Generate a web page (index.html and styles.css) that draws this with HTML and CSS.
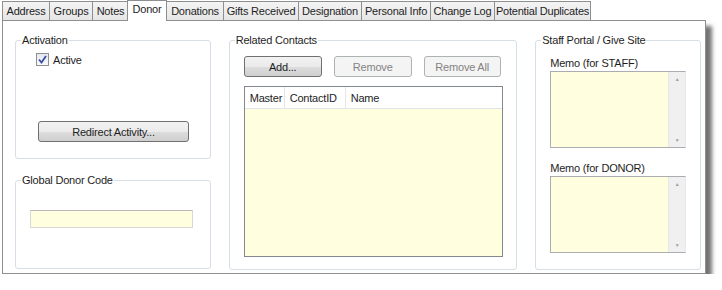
FILE: index.html
```html
<!DOCTYPE html>
<html lang="en">
<head>
    <meta charset="UTF-8">
    <title>Donor</title>
    <link rel="stylesheet" href="styles.css">
</head>
<body>

<div class="window">
    <div class="tabs">
        <div class="tab w47">Address</div>
        <div class="tab w43">Groups</div>
        <div class="tab w36">Notes</div>
        <div class="tab active">Donor</div>
        <div class="tab w57">Donations</div>
        <div class="tab w75">Gifts Received</div>
        <div class="tab w63">Designation</div>
        <div class="tab w69">Personal Info</div>
        <div class="tab w64">Change Log</div>
        <div class="tab w96">Potential Duplicates</div>
    </div>

    <div class="panel">
        <div class="col-left">
            <fieldset class="group activation">
                <legend>Activation</legend>
                <label class="check">
                    <span class="box">
                        <svg width="9" height="9" viewBox="0 0 9 9"><path d="M1 4.5 L3.5 7.5 L8 1" fill="none" stroke="#3b4fa0" stroke-width="1.8"/></svg>
                    </span>
                    Active
                </label>
                <button class="btn redirect">Redirect Activity...</button>
            </fieldset>

            <fieldset class="group global-code">
                <legend>Global Donor Code</legend>
                <div class="textbox"></div>
            </fieldset>
        </div>

        <fieldset class="group related">
            <legend>Related Contacts</legend>
            <div class="btn-row">
                <button class="btn">Add...</button>
                <button class="btn disabled">Remove</button>
                <button class="btn disabled">Remove All</button>
            </div>
            <div class="list">
                <div class="list-head">
                    <span class="col-master">Master</span>
                    <span class="col-id">ContactID</span>
                    <span class="col-name">Name</span>
                </div>
            </div>
        </fieldset>

        <fieldset class="group portal">
            <legend>Staff Portal / Give Site</legend>
            <div class="memo-label">Memo (for STAFF)</div>
            <div class="memo">
                <div class="memo-scroll"><span class="arrow">&#9650;</span><span class="arrow">&#9660;</span></div>
            </div>
            <div class="memo-label">Memo (for DONOR)</div>
            <div class="memo">
                <div class="memo-scroll"><span class="arrow">&#9650;</span><span class="arrow">&#9660;</span></div>
            </div>
        </fieldset>
    </div>
</div>

</body>
</html>
```

FILE: styles.css
```css
body {
    margin: 0;
    background: #ffffff;
    font-family: "Liberation Sans", Arial, sans-serif;
    font-size: 11px;
    letter-spacing: -0.2px;
    color: #1e1e1e;
}
.window {
    margin-left: 2px;
    width: 704px;
}
.tabs {
    display: flex;
    height: 20px;
    align-items: flex-end;
}
.tab {
    height: 19px;
    line-height: 18px;
    box-sizing: border-box;
    background: linear-gradient(#f4f4f4, #e6e6e6);
    border: 1px solid #8e8f8f;
    border-bottom: none;
    margin-right: -1px;
    white-space: nowrap;
    text-align: center;
    overflow: hidden;
}
.w36 { width: 37px; }
.w43 { width: 44px; }
.w47 { width: 48px; }
.w57 { width: 58px; }
.w63 { width: 64px; }
.w64 { width: 65px; }
.w69 { width: 70px; }
.w75 { width: 76px; }
.w96 { width: 97px; }
.tab.active {
    width: 40px;
    height: 21px;
    margin: 0 0 -1px -1px;
    background: #ffffff;
    position: relative;
    z-index: 1;
    line-height: 17px;
}
.tab.active + .tab {
    margin-left: -1px;
}
.panel {
    height: 254px;
    box-sizing: border-box;
    border: 1px solid #8e8f8f;
    background: #ffffff;
    box-shadow: 6px 6px 4px rgba(0, 0, 0, 0.55);
    padding: 13px 4px 0 12px;
    display: flex;
    gap: 18px;
}
.group {
    margin: 0;
    border: 1px solid #d5dfe5;
    border-radius: 3px;
    padding: 0;
    box-sizing: border-box;
}
.group legend {
    margin-left: 5px;
    padding: 0 1px;
}
.col-left {
    width: 196px;
    display: flex;
    flex-direction: column;
    gap: 15px;
}
.activation {
    height: 125px;
    padding-top: 7px;
}
.check {
    display: flex;
    align-items: center;
    gap: 4px;
    margin-left: 20px;
}
.box {
    width: 11px;
    height: 11px;
    border: 1px solid #8f8f8f;
    background: linear-gradient(#e4e8f2, #f8f9fb);
    display: flex;
    align-items: center;
    justify-content: center;
}
.btn {
    font-family: inherit;
    font-size: 11px;
    letter-spacing: -0.2px;
    height: 21px;
    border: 1px solid #707070;
    border-radius: 3px;
    background: linear-gradient(#f2f2f2 0%, #ebebeb 50%, #dddddd 51%, #cfcfcf 100%);
    color: #1e1e1e;
    padding: 0;
}
.btn.disabled {
    border-color: #adb2b5;
    background: #f4f4f4;
    color: #838383;
}
.redirect {
    width: 151px;
    margin: 55px 0 0 22px;
}
.global-code {
    height: 95px;
    padding-top: 24px;
}
.textbox {
    width: 163px;
    height: 18px;
    margin-left: 14px;
    box-sizing: border-box;
    border: 1px solid #d8d8d8;
    border-top-color: #b8b8b8;
    background: #ffffe0;
}
.related {
    width: 289px;
    height: 236px;
    padding-top: 10px;
}
.btn-row {
    display: flex;
    gap: 12px;
    margin-left: 14px;
}
.btn-row .btn {
    width: 78px;
}
.btn-row .btn:nth-child(3) {
    width: 77px;
}
.list {
    margin: 9px 0 0 14px;
    width: 259px;
    height: 171px;
    box-sizing: border-box;
    border: 1px solid #828790;
    background: #ffffe0;
}
.list-head {
    display: flex;
    height: 21px;
    background: #ffffff;
    border-bottom: 1px solid #e0e3e8;
}
.list-head span {
    line-height: 22px;
    padding-left: 5px;
    border-right: 1px solid #e5e5e5;
    box-sizing: border-box;
}
.col-master {
    width: 40px;
}
.col-id {
    width: 61px;
}
.col-name {
    flex: 1;
    border-right: none !important;
}
.portal {
    width: 166px;
    height: 236px;
    padding: 11px 0 0 14px;
}
.portal legend {
    margin-left: -9px;
}
.memo-label {
    margin-bottom: 2px;
}
.memo {
    width: 136px;
    height: 77px;
    box-sizing: border-box;
    border: 1px solid #abadb3;
    border-right-color: #e3e9ef;
    background: #ffffe0;
    display: flex;
    justify-content: flex-end;
    margin-bottom: 14px;
}
.memo-scroll {
    width: 16px;
    background: #f0f0f0;
    border-left: 1px solid #e6e6e6;
    display: flex;
    flex-direction: column;
    justify-content: space-between;
    align-items: center;
    padding: 4px 0;
}
.arrow {
    font-size: 5px;
    color: #a0a0a0;
}
```
